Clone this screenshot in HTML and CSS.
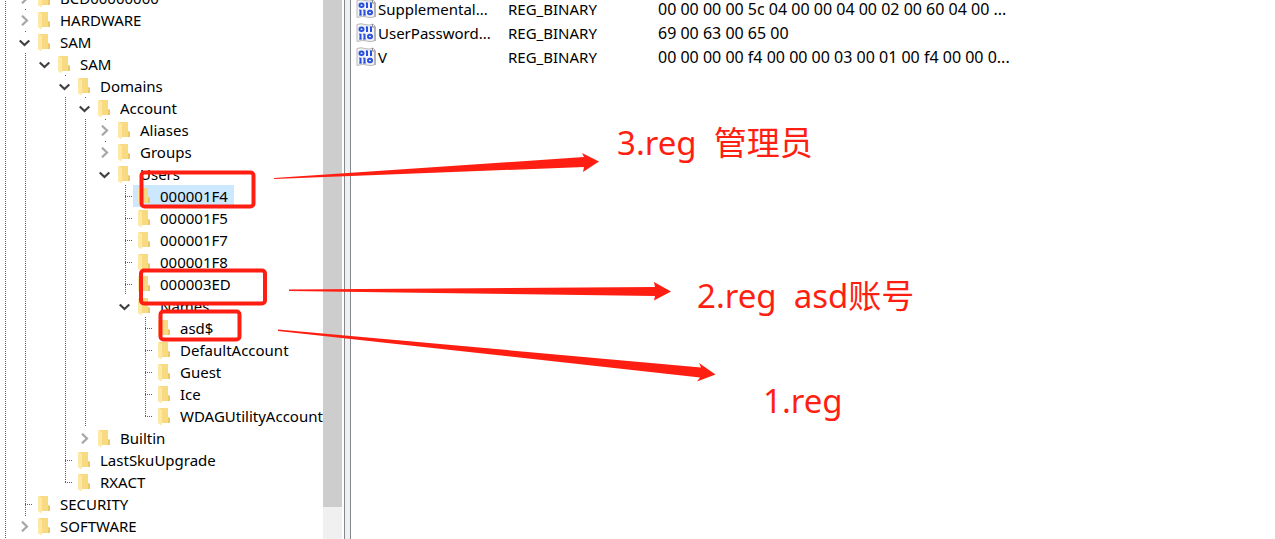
FILE: index.html
```html
<!DOCTYPE html>
<html lang="zh-CN">
<head>
<meta charset="utf-8">
<title>Registry</title>
<link rel="stylesheet" href="styles.css">
</head>
<body>
<svg class="defs" aria-hidden="true">
  <symbol id="folder" viewBox="0 0 12 19">
    <path d="M1 1h9v9l2 1v5H3z" fill="#f8da80"/>
    <path d="M10 10l2 1v5h-2z" fill="#ecc66a"/>
    <path d="M0 1l4 2v13l-1 2.500L0 16z" fill="#ffe8a3"/>
  </symbol>
  <symbol id="open" viewBox="0 0 11 8"><path d="M.7 1.500l4.800 4.500 4.800-4.500" fill="none" stroke="#404040" stroke-width="2.200"/></symbol>
  <symbol id="closed" viewBox="0 0 8 11"><path d="M1 .7L6 5.500 1 10.300" fill="none" stroke="#a6a6a6" stroke-width="2.200"/></symbol>
  <symbol id="binary" viewBox="0 0 20 20">
    <path d="M1 1.500q4-1.500 8 0t8-.5l2 2v14.500q-4 2-8 .5t-10 .5z" fill="#f3f3f6" stroke="#b9b9bd"/>
    <path d="M16.500 1v3H19M19 3.500v14.500" fill="none" stroke="#8f8f94"/>
    <g fill="none" stroke="#2a50e0" stroke-width="2">
      <rect x="3.500" y="4.500" width="4" height="3.500" rx="1.700"/>
      <path d="M11 3.500V9M15 3.500V9M4.500 10.700v5.500M8.500 10.700v5.500"/>
      <path d="M9.800 4h1M13.800 4h1M3.200 11.200h1M7.200 11.200h1M3.200 16h2.600M7.200 16h2.600" stroke-width="1"/>
      <rect x="12" y="11.700" width="4" height="3.500" rx="1.700"/>
    </g>
  </symbol>
</svg>
<main class="window">
  <nav class="tree" aria-label="Keys">
    <ul class="branch root">
      <li><div class="row"><button class="toggle" aria-label="Expand BCD00000000"><svg class="closed"><use href="#closed"/></svg></button><span class="key"><svg class="folder"><use href="#folder"/></svg>BCD00000000</span></div></li>
      <li><div class="row"><button class="toggle" aria-label="Expand HARDWARE"><svg class="closed"><use href="#closed"/></svg></button><span class="key"><svg class="folder"><use href="#folder"/></svg>HARDWARE</span></div></li>
      <li><div class="row"><button class="toggle" aria-label="Collapse SAM"><svg class="open"><use href="#open"/></svg></button><span class="key"><svg class="folder"><use href="#folder"/></svg>SAM</span></div>
        <ul class="branch">
          <li><div class="row"><button class="toggle" aria-label="Collapse SAM"><svg class="open"><use href="#open"/></svg></button><span class="key"><svg class="folder"><use href="#folder"/></svg>SAM</span></div>
            <ul class="branch">
              <li><div class="row"><button class="toggle" aria-label="Collapse Domains"><svg class="open"><use href="#open"/></svg></button><span class="key"><svg class="folder"><use href="#folder"/></svg>Domains</span></div>
                <ul class="branch">
                  <li><div class="row"><button class="toggle" aria-label="Collapse Account"><svg class="open"><use href="#open"/></svg></button><span class="key"><svg class="folder"><use href="#folder"/></svg>Account</span></div>
                    <ul class="branch">
                      <li><div class="row"><button class="toggle" aria-label="Expand Aliases"><svg class="closed"><use href="#closed"/></svg></button><span class="key"><svg class="folder"><use href="#folder"/></svg>Aliases</span></div></li>
                      <li><div class="row"><button class="toggle" aria-label="Expand Groups"><svg class="closed"><use href="#closed"/></svg></button><span class="key"><svg class="folder"><use href="#folder"/></svg>Groups</span></div></li>
                      <li><div class="row"><button class="toggle" aria-label="Collapse Users"><svg class="open"><use href="#open"/></svg></button><span class="key"><svg class="folder"><use href="#folder"/></svg>Users</span></div>
                        <ul class="branch">
                          <li><div class="row"><span class="elbow"></span><span class="key selected"><svg class="folder"><use href="#folder"/></svg>000001F4</span></div></li>
                          <li><div class="row"><span class="elbow"></span><span class="key"><svg class="folder"><use href="#folder"/></svg>000001F5</span></div></li>
                          <li><div class="row"><span class="elbow"></span><span class="key"><svg class="folder"><use href="#folder"/></svg>000001F7</span></div></li>
                          <li><div class="row"><span class="elbow"></span><span class="key"><svg class="folder"><use href="#folder"/></svg>000001F8</span></div></li>
                          <li><div class="row"><span class="elbow"></span><span class="key"><svg class="folder"><use href="#folder"/></svg>000003ED</span></div></li>
                          <li><div class="row"><button class="toggle" aria-label="Collapse Names"><svg class="open"><use href="#open"/></svg></button><span class="key"><svg class="folder"><use href="#folder"/></svg>Names</span></div>
                            <ul class="branch">
                              <li><div class="row"><span class="elbow"></span><span class="key"><svg class="folder"><use href="#folder"/></svg>asd$</span></div></li>
                              <li><div class="row"><span class="elbow"></span><span class="key"><svg class="folder"><use href="#folder"/></svg>DefaultAccount</span></div></li>
                              <li><div class="row"><span class="elbow"></span><span class="key"><svg class="folder"><use href="#folder"/></svg>Guest</span></div></li>
                              <li><div class="row"><span class="elbow"></span><span class="key"><svg class="folder"><use href="#folder"/></svg>Ice</span></div></li>
                              <li><div class="row"><span class="elbow"></span><span class="key"><svg class="folder"><use href="#folder"/></svg>WDAGUtilityAccount</span></div></li>
                            </ul>
                          </li>
                        </ul>
                      </li>
                    </ul>
                  </li>
                  <li><div class="row"><button class="toggle" aria-label="Expand Builtin"><svg class="closed"><use href="#closed"/></svg></button><span class="key"><svg class="folder"><use href="#folder"/></svg>Builtin</span></div></li>
                </ul>
              </li>
              <li><div class="row"><span class="elbow"></span><span class="key"><svg class="folder"><use href="#folder"/></svg>LastSkuUpgrade</span></div></li>
              <li><div class="row"><span class="elbow"></span><span class="key"><svg class="folder"><use href="#folder"/></svg>RXACT</span></div></li>
            </ul>
          </li>
        </ul>
      </li>
      <li><div class="row"><span class="elbow"></span><span class="key"><svg class="folder"><use href="#folder"/></svg>SECURITY</span></div></li>
      <li class="more"><div class="row"><button class="toggle" aria-label="Expand SOFTWARE"><svg class="closed"><use href="#closed"/></svg></button><span class="key"><svg class="folder"><use href="#folder"/></svg>SOFTWARE</span></div></li>
    </ul>
  </nav>
  <div class="scrollbar"><div class="thumb"></div></div>
  <div class="splitter"></div>
  <section class="values">
    <table>
      <colgroup><col class="col-name"><col class="col-type"><col></colgroup>
      <tbody>
        <tr><td><span class="value"><svg class="binary"><use href="#binary"/></svg>Supplemental...</span></td><td>REG_BINARY</td><td class="data">00 00 00 00 5c 04 00 00 04 00 02 00 60 04 00 ...</td></tr>
        <tr><td><span class="value"><svg class="binary"><use href="#binary"/></svg>UserPassword...</span></td><td>REG_BINARY</td><td class="data">69 00 63 00 65 00</td></tr>
        <tr><td><span class="value"><svg class="binary"><use href="#binary"/></svg>V</span></td><td>REG_BINARY</td><td class="data">00 00 00 00 f4 00 00 00 03 00 01 00 f4 00 00 0...</td></tr>
      </tbody>
    </table>
  </section>
  <svg class="marks" width="800" height="539" aria-hidden="true">
    <g fill="none" stroke="#ff1f12" stroke-width="4">
      <rect x="141.500" y="172.500" width="112" height="34" rx="3"/>
      <rect x="141" y="270.500" width="124" height="33" rx="3"/>
      <rect x="160.500" y="311.500" width="79" height="28" rx="3"/>
    </g>
    <g fill="#ff1f12">
      <path d="M274 178L584 157 582 153 599 161.500 583 172 584 167 274 179z"/>
      <path d="M289 289.500L655 287 654 282 671 291.500 654 300.500 655 296 289 291z"/>
      <path d="M278 329.500L701 367.500 699 363 715.500 374.500 697 381.500 700 377.500 278 331z"/>
    </g>
  </svg>
  <p class="note note-3">3.reg&nbsp; 管理员</p>
  <p class="note note-2">2.reg&nbsp; asd账号</p>
  <p class="note note-1">1.reg</p>
</main>
</body>
</html>
```
FILE: styles.css
```css
* {
  box-sizing: border-box;
}

body {
  margin: 0;
  background: #fff;
  color: #000;
  font: 15px/22px "Noto Sans", "Noto Sans CJK SC", sans-serif;
}

.defs {
  display: none;
}

.window {
  position: relative;
  display: flex;
  height: 100vh;
  overflow: hidden;
}

.tree {
  flex: 0 0 323px;
  overflow: hidden;
}

.branch {
  margin: 0;
  padding: 0 0 0 20px;
  list-style: none;
}

.root {
  margin-top: -13px;
  min-height: 100vh;
  padding-bottom: 13px;
}

/* Dotted guide running down beside the keys of one level */
.root,
.branch > li:not(:last-child),
.more {
  background: repeating-linear-gradient(#606060 0 1px, transparent 1px 2px) 5px 0 / 1px 100% no-repeat;
}

.row {
  display: flex;
  height: 22px;
  white-space: nowrap;
}

.toggle,
.elbow {
  flex: 0 0 13px;
  height: 21px;
}

.toggle {
  display: flex;
  align-items: center;
  margin: 1px 0 0 -1px;
  padding: 0 1px 0 0;
  flex-basis: 14px;
  border: 0;
  background: #fff;
}

.toggle .open {
  width: 11px;
  height: 8px;
}

.toggle .closed {
  width: 8px;
  height: 11px;
  margin-left: 2px;
}

.elbow {
  background: repeating-linear-gradient(90deg, #606060 0 1px, transparent 1px 2px) 5px 11px / 8px 1px no-repeat;
}

li:last-child > .row > .elbow {
  background:
    repeating-linear-gradient(90deg, #606060 0 1px, transparent 1px 2px) 5px 11px / 8px 1px no-repeat,
    repeating-linear-gradient(#606060 0 1px, transparent 1px 2px) 5px 0 / 1px 11px no-repeat;
}

.key {
  display: flex;
  gap: 10px;
  align-items: center;
  padding-left: 5px;
}

.selected {
  padding-right: 6px;
  background: #cce8ff;
}

.folder {
  width: 12px;
  height: 19px;
}

.scrollbar {
  flex: 0 0 19px;
  background: #f0f0f0;
}

.thumb {
  height: 94%;
  background: #cdcdcd;
}

.splitter {
  flex: 0 0 7px;
  margin-left: 2px;
  border: solid #828790;
  border-width: 0 1px;
  background: #f0f0f0;
}

.values {
  flex: 1;
  min-width: 0;
}

table {
  width: 100%;
  margin-top: -3px;
  border-collapse: collapse;
  table-layout: fixed;
}

.col-name {
  width: 157px;
}

.col-type {
  width: 150px;
}

td {
  height: 24px;
  padding: 0;
  white-space: nowrap;
}

.data {
  font-size: 16px;
}

.value {
  display: flex;
  gap: 2px;
  align-items: center;
  padding-left: 5px;
}

.binary {
  width: 20px;
  height: 20px;
}

.marks {
  position: absolute;
  top: 0;
  left: 0;
}

.note {
  position: absolute;
  margin: 0;
  color: #ff1f12;
  font-size: 33px;
  line-height: 44px;
  white-space: nowrap;
}

.note-3 {
  top: 121px;
  left: 617px;
}

.note-2 {
  top: 274px;
  left: 697px;
}

.note-1 {
  top: 379px;
  left: 763px;
}
```
